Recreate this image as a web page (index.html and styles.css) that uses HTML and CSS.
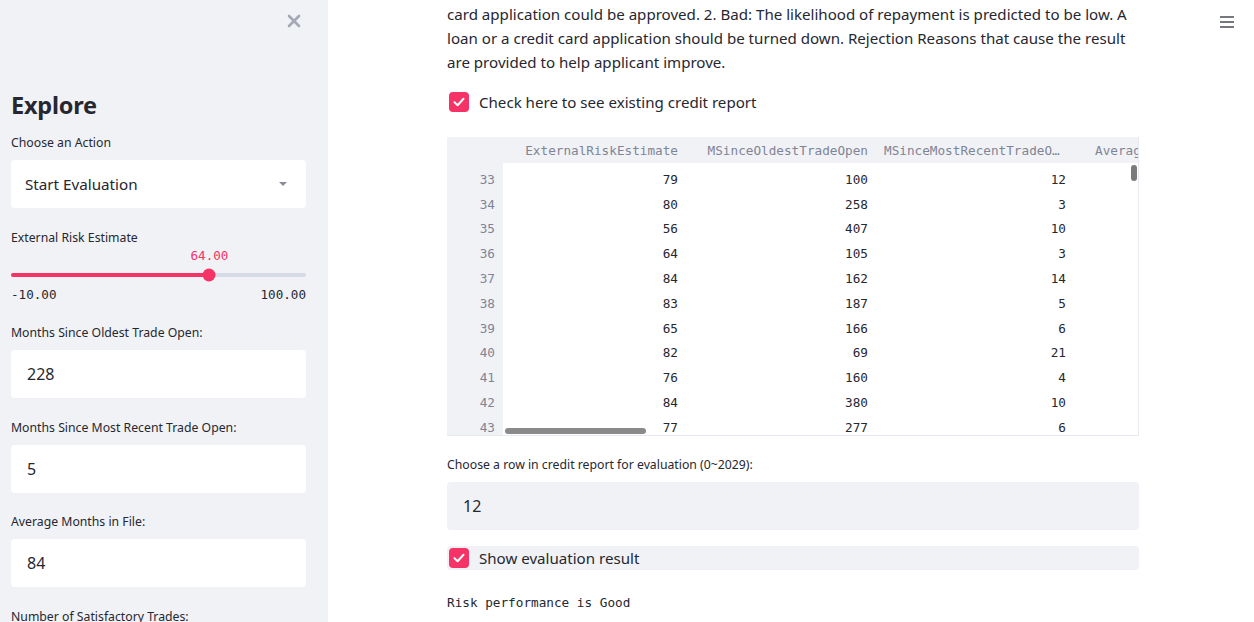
FILE: index.html
```html
<!DOCTYPE html>
<html lang="en">
<head>
<meta charset="utf-8">
<title>Explore</title>
<link rel="stylesheet" href="styles.css">
</head>
<body>
<div class="app">
  <aside class="sidebar">
    <div class="sb-top">
      <span class="close" aria-label="Close">
        <svg width="14" height="14" viewBox="0 0 14 14"><path d="M2 2 L12 12 M12 2 L2 12" stroke="#a3a8b4" stroke-width="2.6" stroke-linecap="round"/></svg>
      </span>
    </div>
    <h1 class="sb-title">Explore</h1>

    <div class="field">
      <div class="label">Choose an Action</div>
      <div class="select">
        <span>Start Evaluation</span>
        <svg class="caret" width="10" height="6" viewBox="0 0 10 6"><path d="M1 1 L5 5 L9 1 Z" fill="#8a8d99"/></svg>
      </div>
    </div>

    <div class="field slider">
      <div class="label">External Risk Estimate</div>
      <div class="slider-value"><span class="thumb-value" style="left: 67.27%">64.00</span></div>
      <div class="track-wrap">
        <div class="track">
          <div class="track-fill" style="width: 67.27%"></div>
          <div class="thumb" style="left: 67.27%"></div>
        </div>
      </div>
      <div class="minmax"><span>-10.00</span><span>100.00</span></div>
    </div>

    <div class="field">
      <div class="label">Months Since Oldest Trade Open:</div>
      <div class="input">228</div>
    </div>
    <div class="field">
      <div class="label">Months Since Most Recent Trade Open:</div>
      <div class="input">5</div>
    </div>
    <div class="field">
      <div class="label">Average Months in File:</div>
      <div class="input">84</div>
    </div>
    <div class="field">
      <div class="label">Number of Satisfactory Trades:</div>
    </div>
  </aside>

  <main class="main">
    <div class="content">
      <p class="para">card application could be approved. 2. Bad: The likelihood of repayment is predicted to be low. A<br>loan or a credit card application should be turned down. Rejection Reasons that cause the result<br>are provided to help applicant improve.</p>

      <div class="check-row">
        <span class="box"><svg width="12" height="10" viewBox="0 0 12 10"><path d="M1.5 5.2 L4.6 8.2 L10.5 1.8" fill="none" stroke="#fff" stroke-width="2" stroke-linecap="round" stroke-linejoin="round"/></svg></span>
        <span class="check-label">Check here to see existing credit report</span>
      </div>

      <div class="table">
        <div class="table-scroll">
          <div class="trow thead">
            <div class="cell idx"></div>
            <div class="cell c1">ExternalRiskEstimate</div>
            <div class="cell c2">MSinceOldestTradeOpen</div>
            <div class="cell c3">MSinceMostRecentTradeOpen</div>
            <div class="cell c4">Averag</div>
          </div>
          <div class="tbody">
            <div class="trow"><div class="cell idx">33</div><div class="cell c1">79</div><div class="cell c2">100</div><div class="cell c3">12</div></div>
            <div class="trow"><div class="cell idx">34</div><div class="cell c1">80</div><div class="cell c2">258</div><div class="cell c3">3</div></div>
            <div class="trow"><div class="cell idx">35</div><div class="cell c1">56</div><div class="cell c2">407</div><div class="cell c3">10</div></div>
            <div class="trow"><div class="cell idx">36</div><div class="cell c1">64</div><div class="cell c2">105</div><div class="cell c3">3</div></div>
            <div class="trow"><div class="cell idx">37</div><div class="cell c1">84</div><div class="cell c2">162</div><div class="cell c3">14</div></div>
            <div class="trow"><div class="cell idx">38</div><div class="cell c1">83</div><div class="cell c2">187</div><div class="cell c3">5</div></div>
            <div class="trow"><div class="cell idx">39</div><div class="cell c1">65</div><div class="cell c2">166</div><div class="cell c3">6</div></div>
            <div class="trow"><div class="cell idx">40</div><div class="cell c1">82</div><div class="cell c2">69</div><div class="cell c3">21</div></div>
            <div class="trow"><div class="cell idx">41</div><div class="cell c1">76</div><div class="cell c2">160</div><div class="cell c3">4</div></div>
            <div class="trow"><div class="cell idx">42</div><div class="cell c1">84</div><div class="cell c2">380</div><div class="cell c3">10</div></div>
            <div class="trow"><div class="cell idx">43</div><div class="cell c1">77</div><div class="cell c2">277</div><div class="cell c3">6</div></div>
          </div>
        </div>
        <div class="hscroll"></div>
        <div class="vscroll"></div>
      </div>

      <div class="field main-field">
        <div class="label">Choose a row in credit report for evaluation (0~2029):</div>
        <div class="input gray">12</div>
      </div>

      <div class="check-row hover">
        <span class="box"><svg width="12" height="10" viewBox="0 0 12 10"><path d="M1.5 5.2 L4.6 8.2 L10.5 1.8" fill="none" stroke="#fff" stroke-width="2" stroke-linecap="round" stroke-linejoin="round"/></svg></span>
        <span class="check-label">Show evaluation result</span>
      </div>

      <pre class="result">Risk performance is Good</pre>
    </div>

    <span class="menu" aria-label="Menu">
      <svg width="16" height="14" viewBox="0 0 16 14"><path d="M1 2 H15 M1 7 H15 M1 12 H15" stroke="#4a4c55" stroke-width="1.6"/></svg>
    </span>
  </main>
</div>
</body>
</html>
```

FILE: styles.css
```css
* { box-sizing: border-box; }

html, body {
  margin: 0;
  padding: 0;
  height: 100%;
  overflow: hidden;
  background: #ffffff;
  color: #262730;
  font-family: "Noto Sans", "Open Sans", sans-serif;
}

.app {
  display: flex;
  height: 622px;
}

/* Sidebar */
.sidebar {
  width: 328px;
  flex: 0 0 328px;
  background: #f1f2f6;
  padding: 0 22px 0 11px;
  overflow: hidden;
}

.sb-top {
  height: 42px;
  display: flex;
  justify-content: flex-end;
  align-items: center;
}

.close {
  display: flex;
  width: 14px;
  height: 14px;
  margin-right: 5px;
}

.sb-title {
  margin: 45px 0 0;
  font-size: 23.5px;
  line-height: 36px;
  font-weight: 700;
  letter-spacing: -0.2px;
}

.field {
  margin-top: 10px;
}
.field + .field {
  margin-top: 19.5px;
}
.field + .field.slider {
  margin-top: 20px;
}
.slider + .field {
  margin-top: 19px;
}

.label {
  font-size: 12.25px;
  line-height: 20px;
  color: #262730;
}

.select, .input {
  margin-top: 7px;
  height: 48px;
  background: #ffffff;
  border-radius: 4px;
  display: flex;
  align-items: center;
  padding: 0 16px 0 14px;
  font-size: 16px;
}

.select {
  justify-content: space-between;
  padding-right: 18px;
  font-size: 15.2px;
}

.input {
  padding-left: 16px;
}

.input.gray {
  background: #f0f2f6;
}

/* Slider */
.slider-value {
  position: relative;
  height: 17px;
}
.thumb-value {
  position: absolute;
  top: 0;
  transform: translateX(-50%);
  font-family: "DejaVu Sans Mono", monospace;
  font-size: 12.6px;
  line-height: 16px;
  color: #f63366;
}
.track-wrap {
  height: 19px;
  display: flex;
  align-items: center;
}
.track {
  position: relative;
  width: 100%;
  height: 4px;
  border-radius: 2px;
  background: #d5dae4;
}
.track-fill {
  height: 4px;
  border-radius: 2px;
  background: #f63366;
}
.thumb {
  position: absolute;
  top: 50%;
  width: 13px;
  height: 13px;
  border-radius: 50%;
  background: #f63366;
  transform: translate(-50%, -50%);
}
.minmax {
  display: flex;
  justify-content: space-between;
  height: 20px;
  align-items: center;
  font-family: "DejaVu Sans Mono", monospace;
  font-size: 12.6px;
  color: #262730;
}

/* Main */
.main {
  position: relative;
  flex: 1;
  min-width: 0;
}

.content {
  width: 692px;
  margin-left: 119px;
  padding-top: 2px;
}

.para {
  margin: 0;
  font-size: 15.1px;
  line-height: 24px;
  white-space: nowrap;
}

.check-row {
  display: flex;
  align-items: center;
  gap: 10px;
  height: 24px;
  margin-top: 16px;
  padding-left: 2px;
  border-radius: 4px;
}
.check-row.hover {
  background: #f0f2f6;
}

.box {
  width: 20px;
  height: 20px;
  border-radius: 4px;
  background: #f63366;
  display: flex;
  align-items: center;
  justify-content: center;
}

.check-label {
  font-size: 15.1px;
  line-height: 24px;
}

/* Table */
.table {
  position: relative;
  margin-top: 23px;
  height: 299px;
  border-right: 1px solid #e6e9ef;
  border-bottom: 1px solid #e6e9ef;
  overflow: hidden;
}
.table-scroll {
  width: 100%;
  height: 100%;
  overflow: hidden;
}
.trow {
  display: grid;
  grid-template-columns: 56px 187px 190px 198px 135px;
  height: 24.8px;
  align-items: center;
}
.thead {
  height: 26px;
  background: #f0f2f6;
}
.tbody {
  padding-top: 4px;
  background: linear-gradient(to right, #f0f2f6 56px, #ffffff 56px);
}
.cell {
  font-family: "DejaVu Sans Mono", monospace;
  font-size: 12.7px;
  text-align: right;
  padding: 0 12px 0 4px;
  white-space: nowrap;
  overflow: hidden;
  text-overflow: ellipsis;
  color: #262730;
}
.thead .cell {
  color: #808495;
}
.thead .c3 {
  text-align: left;
  padding-right: 17px;
}
.thead .c4 {
  text-align: left;
  padding-left: 17px;
  overflow: visible;
}
.cell.idx {
  background: #f0f2f6;
  color: #808495;
  height: 100%;
  display: flex;
  align-items: center;
  justify-content: flex-end;
  padding-right: 8px;
}

.hscroll {
  position: absolute;
  left: 58px;
  top: 291px;
  width: 141px;
  height: 6px;
  border-radius: 3px;
  background: #8a8a8a;
}
.vscroll {
  position: absolute;
  right: 1px;
  top: 28px;
  width: 6px;
  height: 16px;
  border-radius: 3px;
  background: #7a7a7a;
}

.main-field {
  margin-top: 19px;
}

.result {
  margin: 23px 0 0;
  font-family: "DejaVu Sans Mono", monospace;
  font-size: 12.7px;
  line-height: 20px;
  color: #262730;
}

.menu {
  position: absolute;
  top: 15px;
  right: 19px;
  display: flex;
}
```
